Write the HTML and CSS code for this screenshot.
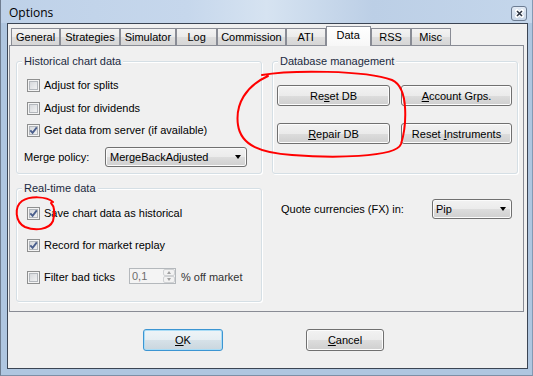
FILE: index.html
```html
<!DOCTYPE html>
<html>
<head>
    <title>Options</title>
    <link rel="stylesheet" href="styles.css">
</head>
<body>
    <div class="window">
        <div class="titlebar">
            <span class="title">Options</span>
            <span class="close-btn">
                <svg width="9" height="9" viewBox="0 0 9 9">
                    <path d="M2 2L7 7M7 2L2 7" stroke="#fff" stroke-width="3.6" stroke-linecap="square"/>
                    <path d="M2 2L7 7M7 2L2 7" stroke="#2e3643" stroke-width="1.6"/>
                </svg>
            </span>
        </div>

        <div class="client">
            <div class="tabs">
                <div class="tab">General</div>
                <div class="tab">Strategies</div>
                <div class="tab">Simulator</div>
                <div class="tab wide">Log</div>
                <div class="tab narrow">Commission</div>
                <div class="tab">ATI</div>
                <div class="tab selected">Data</div>
                <div class="tab">RSS</div>
                <div class="tab">Misc</div>
            </div>

            <div class="panel">
                <div class="grid">
                    <!-- Historical chart data -->
                    <div class="group">
                        <span class="group-title">Historical chart data</span>
                        <div class="hist-body">
                            <div class="check-row"><span class="checkbox"></span><span class="check-label">Adjust for splits</span></div>
                            <div class="check-row"><span class="checkbox"></span><span class="check-label">Adjust for dividends</span></div>
                            <div class="check-row">
                                <span class="checkbox"><svg viewBox="0 0 11 11"><path d="M2.3 5.3L4.6 7.8L8.8 2.4"/></svg></span>
                                <span class="check-label">Get data from server (if available)</span>
                            </div>
                            <div class="merge-row">
                                <span class="merge-label">Merge policy:</span>
                                <div class="combo merge-combo"><span>MergeBackAdjusted</span><span class="arrow"></span></div>
                            </div>
                        </div>
                    </div>

                    <!-- Database management -->
                    <div class="group">
                        <span class="group-title">Database management</span>
                        <div class="db-buttons">
                            <div class="btn"><span>Re<u>s</u>et DB</span></div>
                            <div class="btn"><span><u>A</u>ccount Grps.</span></div>
                            <div class="btn"><span><u>R</u>epair DB</span></div>
                            <div class="btn"><span>Reset <u>I</u>nstruments</span></div>
                        </div>
                    </div>

                    <!-- Real-time data -->
                    <div class="group">
                        <span class="group-title">Real-time data</span>
                        <div class="rt-body">
                            <div class="check-row">
                                <span class="checkbox"><svg viewBox="0 0 11 11"><path d="M2.3 5.3L4.6 7.8L8.8 2.4"/></svg></span>
                                <span class="check-label">Save chart data as historical</span>
                            </div>
                            <div class="check-row">
                                <span class="checkbox"><svg viewBox="0 0 11 11"><path d="M2.3 5.3L4.6 7.8L8.8 2.4"/></svg></span>
                                <span class="check-label">Record for market replay</span>
                            </div>
                            <div class="check-row">
                                <span class="checkbox"></span>
                                <span class="check-label filter-label">Filter bad ticks</span>
                                <div class="spin">
                                    <span class="spin-value">0,1</span>
                                    <span class="spin-btns">
                                        <span class="spin-btn"><span class="tri-up"></span></span>
                                        <span class="spin-btn"><span class="tri-down"></span></span>
                                    </span>
                                </div>
                                <span class="off-label">% off market</span>
                            </div>
                        </div>
                    </div>

                    <div class="quote-cell">
                        <span class="quote-label">Quote currencies (FX) in:</span>
                        <div class="combo pip-combo"><span>Pip</span><span class="arrow"></span></div>
                    </div>
                </div>
            </div>

            <div class="footer">
                <div class="btn default ok-btn"><span><u>O</u>K</span></div>
                <div class="btn cancel-btn"><span><u>C</u>ancel</span></div>
            </div>
        </div>

        <!-- red pen marks drawn over the dialog -->
        <svg class="marks" width="533" height="376" viewBox="0 0 533 376">
            <path d="M262 75C290 70 365 70 392 80C410 88 406 128 401 144C396 158 330 158 292 155C262 153 241 146 238 125C235 104 246 86 268 76"/>
            <path d="M53 202C46 196 30 196 22 201C14 207 15 222 25 227C35 231 49 230 53 221C55 213 55 207 51 203"/>
        </svg>
    </div>
</body>
</html>
```

FILE: styles.css
```css
body { margin: 0; font-family: "Liberation Sans", Arial, sans-serif; font-size: 11px; color: #000; background: #fff; }
.window { position: relative; width: 533px; height: 376px; box-sizing: border-box; display: flex; flex-direction: column; background: #afc6e0; border-left: 1px solid #6f7d90; border-right: 1px solid #8499b3; border-bottom: 1px solid #7d8fa6; padding: 0 4px 6px 6px; }

.titlebar { height: 23px; box-sizing: border-box; display: flex; justify-content: space-between; align-items: flex-start; margin: 0 -4px 0 -6px; padding: 5px 5px 0 8px; background: linear-gradient(to right, #bed1e8 0%, #c6d7ec 35%, #d6e3f1 50%, #bccfe6 70%, #c4d6eb 100%); }
.title { font-family: "Open Sans", "Liberation Sans", sans-serif; font-size: 12px; line-height: 16px; color: #000; }
.close-btn { width: 16px; height: 15px; box-sizing: border-box; margin-top: 1px; border: 1px solid #6c7c92; border-radius: 3px; background: linear-gradient(#e3ebf5, #c9d7e8); display: flex; align-items: center; justify-content: center; }

.client { flex: 1; border: 1px solid #3b4554; background: #f0f0f0; }

.tabs { height: 21px; box-sizing: border-box; display: flex; align-items: flex-end; padding-left: 3px; }
.tab { height: 17px; min-width: 40px; box-sizing: border-box; padding: 0 4px; border: 1px solid #898c95; border-bottom: 0; line-height: 16px; text-align: center; white-space: nowrap; background: linear-gradient(#f3f3f3, #ebebeb 50%, #dedede 51%, #d6d6d6); }
.tab.wide { min-width: 41px; }
.tab.narrow { padding: 0 3px; }
.tab.selected { position: relative; z-index: 1; height: 20px; min-width: 45px; margin-bottom: -1px; line-height: 17px; background: linear-gradient(#ffffff, #f7f7f7); }

.panel { width: 515px; height: 267px; box-sizing: border-box; margin-left: 1px; border: 1px solid #898c95; background: #f0f0f0; padding: 15px 0 0 6px; }
.grid { display: grid; grid-template-columns: 246px 246px; grid-template-rows: 113px 114px; column-gap: 10px; row-gap: 14px; }

.group { box-sizing: border-box; border: 1px solid #d5dfe5; border-radius: 3px; box-shadow: inset 1px 1px 0 #fff, 1px 1px 0 #fff; }
.group-title { display: block; width: fit-content; margin: -7px 0 0 5px; padding: 0 2px; line-height: 13px; background: #f0f0f0; color: #1b2a3f; }

.hist-body { padding: 11px 0 0 10px; }
.rt-body { padding: 12px 0 0 10px; }
.check-row { height: 13px; display: flex; align-items: flex-start; }
.hist-body .check-row { margin-bottom: 9.5px; }
.rt-body .check-row { margin-bottom: 19px; }
.check-label { margin-left: 4px; line-height: 13px; white-space: nowrap; }

.checkbox { width: 13px; height: 13px; flex: none; box-sizing: border-box; border: 1px solid #8e8f8f; background: linear-gradient(135deg, #cfd2d6, #f8f8f8); box-shadow: inset 0 0 0 1px #f4f4f4, inset 0 0 0 2px #b3b7bc; }
.checkbox svg { display: block; width: 11px; height: 11px; }
.checkbox path { fill: none; stroke: #4b5f8d; stroke-width: 1.9; }

.merge-row { display: flex; align-items: center; margin: 10px 0 0 -3px; }
.merge-label { width: 81px; }

.combo { height: 20px; box-sizing: border-box; display: flex; align-items: center; justify-content: space-between; padding: 0 5px 0 4px; border: 1px solid #707070; border-radius: 3px; background: linear-gradient(#f2f2f2, #ebebeb 50%, #dddddd 51%, #cfcfcf); box-shadow: inset 0 0 0 1px #fbfbfb; }
.merge-combo { width: 142px; }
.pip-combo { width: 80px; padding-left: 3px; }
.arrow { width: 0; height: 0; border-left: 3.5px solid transparent; border-right: 3.5px solid transparent; border-top: 4px solid #000; }

.db-buttons { display: grid; grid-template-columns: 113px 111px; grid-auto-rows: 21px; column-gap: 11px; row-gap: 17px; padding: 17px 0 0 4px; }
.btn { box-sizing: border-box; display: flex; align-items: center; justify-content: center; white-space: nowrap; border: 1px solid #707070; border-radius: 3px; background: linear-gradient(#f2f2f2, #ebebeb 50%, #dddddd 51%, #cfcfcf); box-shadow: inset 0 0 0 1px #fcfcfc; }
.btn.default { border-color: #3c95d2; box-shadow: inset 0 0 0 1px #a9dcf6; background: linear-gradient(#eef4f8, #e6eef3 50%, #d6e1e8 51%, #cad6de); }

.filter-label { width: 85px; flex: none; }
.spin { width: 47px; height: 16px; box-sizing: border-box; margin-top: -3px; display: flex; justify-content: space-between; border: 1px solid #b4b8bc; background: #f4f4f4; }
.spin-value { padding-left: 2px; line-height: 14px; color: #6d6d6d; }
.spin-btns { width: 12px; display: flex; flex-direction: column; }
.spin-btn { flex: 1; box-sizing: border-box; display: flex; align-items: center; justify-content: center; border: 1px solid #d0d2d4; border-radius: 2px; background: #f2f2f2; }
.tri-up { width: 0; height: 0; border-left: 2.5px solid transparent; border-right: 2.5px solid transparent; border-bottom: 3px solid #a0a0a0; }
.tri-down { width: 0; height: 0; border-left: 2.5px solid transparent; border-right: 2.5px solid transparent; border-top: 3px solid #a0a0a0; }
.off-label { margin-left: 5px; line-height: 13px; color: #333; white-space: nowrap; }

.quote-cell { display: flex; align-items: center; align-self: start; padding: 11px 0 0 9px; }
.quote-label { width: 151px; }

.footer { display: flex; gap: 83px; padding: 17px 0 0 135px; }
.ok-btn { width: 80px; height: 22px; }
.cancel-btn { width: 78px; height: 22px; }

.marks { position: absolute; left: -1px; top: 0; pointer-events: none; }
.marks path { fill: none; stroke: #f00; stroke-width: 2; stroke-linecap: round; }
```
